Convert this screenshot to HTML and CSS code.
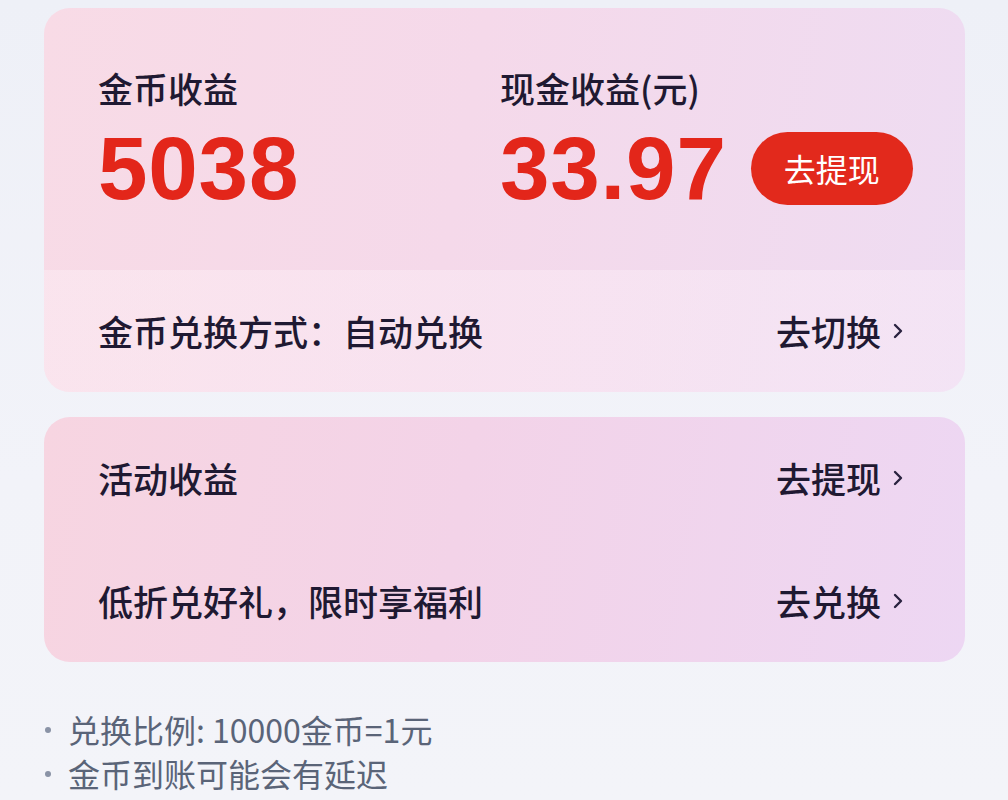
FILE: index.html
```html
<!DOCTYPE html>
<html lang="zh-CN">
<head>
<meta charset="utf-8">
<title>收益</title>
<link rel="stylesheet" href="styles.css">
</head>
<body>
<div class="page">
  <section class="card card-main">
    <div class="earn">
      <div class="col col-coin">
        <div class="label">金币收益</div>
        <div class="amount">5038</div>
      </div>
      <div class="col col-cash">
        <div class="label">现金收益(元)</div>
        <div class="amount-row">
          <div class="amount">33.97</div>
          <div class="btn">去提现</div>
        </div>
      </div>
    </div>
    <div class="row row-light">
      <div class="row-text">金币兑换方式：自动兑换</div>
      <div class="link">去切换<svg class="chev" viewBox="0 0 10 16" width="10" height="16"><polyline points="2,2 8,8 2,14" fill="none" stroke="#2a2340" stroke-width="2.4" stroke-linecap="round" stroke-linejoin="round"/></svg></div>
    </div>
  </section>

  <section class="card card-act">
    <div class="row">
      <div class="row-text">活动收益</div>
      <div class="link">去提现<svg class="chev" viewBox="0 0 10 16" width="10" height="16"><polyline points="2,2 8,8 2,14" fill="none" stroke="#2a2340" stroke-width="2.4" stroke-linecap="round" stroke-linejoin="round"/></svg></div>
    </div>
    <div class="row">
      <div class="row-text">低折兑好礼，限时享福利</div>
      <div class="link">去兑换<svg class="chev" viewBox="0 0 10 16" width="10" height="16"><polyline points="2,2 8,8 2,14" fill="none" stroke="#2a2340" stroke-width="2.4" stroke-linecap="round" stroke-linejoin="round"/></svg></div>
    </div>
  </section>

  <ul class="notes">
    <li>兑换比例: 10000金币=1元</li>
    <li>金币到账可能会有延迟</li>
  </ul>
</div>
</body>
</html>
```

FILE: styles.css
```css
html, body {
  margin: 0;
  padding: 0;
}
body {
  width: 1008px;
  height: 800px;
  overflow: hidden;
  background: linear-gradient(180deg, #eef0f7 0%, #f2f3f9 60%, #f3f4f9 100%);
  font-family: "Noto Sans CJK SC", "Noto Sans", sans-serif;
  color: #1f1932;
}
.page {
  padding: 8px 43px 0 44px;
}
.card {
  border-radius: 26px;
  overflow: hidden;
}
.card-main {
  height: 384px;
  display: flex;
  flex-direction: column;
  background: linear-gradient(100deg, #f8dbe6 0%, #f5d9ea 45%, #eedcf2 100%);
}
.earn {
  height: 262px;
  box-sizing: border-box;
  padding: 60px 0 0 54px;
  display: grid;
  grid-template-columns: 402px 1fr;
}
.label {
  font-size: 35px;
  line-height: 40px;
  font-weight: 500;
}
.amount {
  font-family: "Liberation Sans", Arial, sans-serif;
  font-weight: 700;
  font-size: 89px;
  line-height: 88px;
  color: #e3261a;
  letter-spacing: 0.8px;
}
.col-coin .amount {
  margin-top: 16px;
}
.amount-row {
  margin-top: 16px;
  display: flex;
  align-items: center;
  gap: 24px;
}
.btn {
  width: 162px;
  height: 73px;
  border-radius: 37px;
  background: #e2291c;
  color: #fff;
  font-size: 32px;
  line-height: 73px;
  text-align: center;
}
.row {
  height: 122px;
  box-sizing: border-box;
  padding: 0 62px 0 54px;
  display: flex;
  align-items: center;
  justify-content: space-between;
}
.row-light {
  flex: 1;
  background: linear-gradient(100deg, rgba(255,246,250,0.35) 0%, rgba(255,245,252,0.3) 100%);
}
.row-text {
  font-size: 35px;
  font-weight: 500;
  line-height: 40px;
}
.link {
  display: flex;
  align-items: center;
  font-size: 35px;
  font-weight: 500;
  line-height: 40px;
}
.chev {
  margin-left: 12px;
  display: block;
}
.card-act {
  margin-top: 25px;
  height: 245px;
  display: flex;
  flex-direction: column;
  justify-content: center;
  background: linear-gradient(100deg, #f7d5e1 0%, #f3d3e8 45%, #edd7f3 100%);
}
.card-act .row {
  height: 123px;
}
.notes {
  list-style: none;
  margin: 45px 0 0 0;
  padding: 0;
  font-size: 32px;
  line-height: 44px;
  color: #5a6478;
}
.notes li {
  position: relative;
  padding-left: 24px;
}
.notes li::before {
  content: "";
  position: absolute;
  left: 1px;
  top: 20px;
  width: 6px;
  height: 6px;
  border-radius: 50%;
  background: #8a93a6;
}
```
